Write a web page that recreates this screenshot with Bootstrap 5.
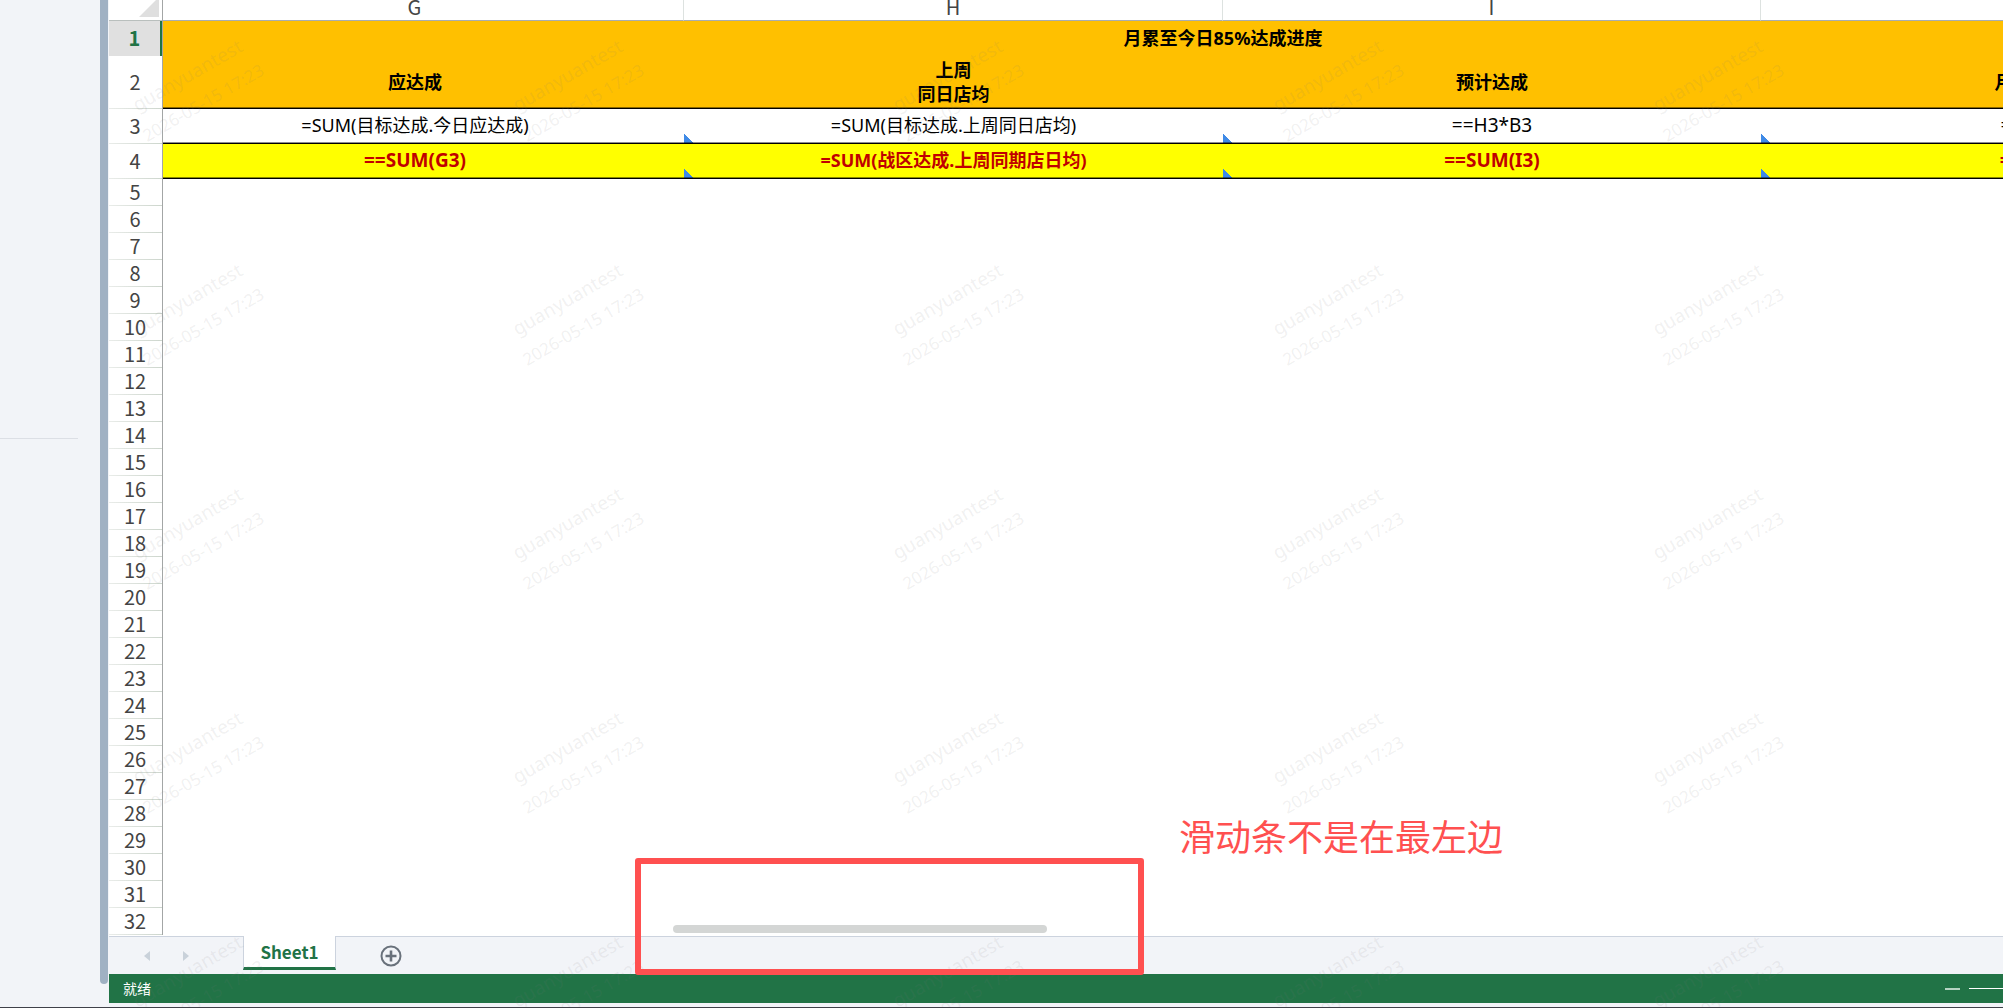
<!DOCTYPE html>
<html lang="zh-CN">
<head>
<meta charset="utf-8">
<meta name="viewport" content="width=device-width, initial-scale=1">
<title>Sheet1</title>
<link href="https://cdn.jsdelivr.net/npm/bootstrap@5.3.0/dist/css/bootstrap.min.css" rel="stylesheet">
<style>
body{font-family:"Noto Sans CJK SC","Noto Sans",sans-serif;background:#f2f4f8;color:#000}
.app-shell{border-bottom:1px solid #3f4149}
.side-panel{width:100px}
.side-rule{width:78px;height:1px;margin-top:438px;background:#dcdfe5}
.side-track{width:9px}
.side-thumb{width:8px;height:calc(100% - 23px);background:#a0b1c3;border-radius:0 0 4px 4px}
.sheet-area{background:#fff}
.row-heads{width:54px;font-size:20px;color:#444;border-right:1px solid #a3a6a6;margin-bottom:1px}
.corner-box{height:21px;border-bottom:1px solid #b9bfbd}
.corner-box svg{display:block}
.row-no{height:27px;line-height:25px;text-align:center;padding-right:1px;background:linear-gradient(90deg,#e9ece9,#cdd6cd) bottom/100% 1px no-repeat}
.row-mid{height:35px;line-height:33px}
.row-tall{height:53px;line-height:51px}
.row-on{background:#e0e0e0;color:#217346;font-weight:700;border-right:2px solid #217346;padding-right:0}
.cells{width:2154px;margin-left:-17px;table-layout:fixed;border-collapse:separate;border-spacing:0;font-family:"Noto Sans","Noto Sans CJK SC",sans-serif;font-size:18px;line-height:24px;text-align:center}
.cells td,.cells th{padding:0;vertical-align:middle;overflow:hidden}
.cells td,.cells .row-title th{padding-bottom:2px}
.cells .latin-cell{font-size:19px}
.cells .col-head th{font-family:"Noto Sans CJK SC",sans-serif;font-size:20px;line-height:13px;font-weight:400;color:#444;height:21px;vertical-align:top;border-bottom:1px solid #a9adb0;border-right:1px solid #dde2e0}
.row-title{height:35px;background:#ffc000}
.row-label{height:53px;background:#ffc000}
.row-plain,.row-sum{height:35px}
.row-sum{background:#ff0;color:#c00000;font-weight:700}
.row-label th,.row-plain td,.row-sum td{border-bottom:1px solid #000;box-shadow:inset 0 -1px rgba(0,0,0,.45)}
.has-mark{background:linear-gradient(to top right,#3f8ae6 50%,transparent 50%) left bottom/9px 10px no-repeat}
.h-thumb{left:29.8%;width:19.7%;height:8px;bottom:3px;border-radius:4px;background:#d4d6d5}
.tab-bar{height:38px;border-top:1px solid #ccd3de;background:#f2f4f8}
.tab-arrows{width:134px;padding-left:34px;gap:28px}
.plain-btn{border:0;background:none;padding:0;line-height:0}
.sheet-tab{width:93px;height:34px;margin-top:-1px;padding:0;background:#fff;border:1px solid #ccd3de;border-width:0 1px 3px;border-bottom-color:#217346;color:#217346;font-weight:700;font-size:17px;line-height:30px}
.add-tab{margin-left:44px}
.status-bar{height:29px;background:#217346;color:#fff;font-size:14px;padding-left:14px}
.status-bar .zoom-minus{width:15px;height:2px;background:#b5d3c2}
.zoom-box{width:34px;margin-left:9px}
.zoom-range{appearance:none;flex:none;width:150px;height:1px;background:#fff;margin:0}
.zoom-range::-webkit-slider-thumb{appearance:none;width:4px;height:12px;background:#fff}
.foot-gap{height:4px}
.wm-layer{inset:0;pointer-events:none}
.wm-grid{display:grid;grid-template-columns:repeat(5,380px);grid-auto-rows:224px;margin:-23px 0 0 5px;font-family:"Noto Sans",sans-serif;color:rgba(125,125,125,.11)}
.wm-tile{display:flex;align-items:center;justify-content:center}
.wm-text{transform:rotate(-30deg);text-align:center;white-space:nowrap;line-height:32px;font-size:17px}
.wm-name{font-size:19px}
.note-box{left:635px;top:858px;width:509px;height:117px;border:6px solid #ff5050;border-radius:3px}
.note-text{left:1179px;top:810px;font-size:36px;line-height:50px;color:#ff5050;white-space:nowrap}
</style>
<script src="https://cdn.jsdelivr.net/npm/bootstrap@5.3.0/dist/js/bootstrap.bundle.min.js"></script>
</head>
<body>
<div class="app-shell d-flex vh-100 overflow-hidden position-relative">
  <aside class="side-panel flex-shrink-0"><div class="side-rule"></div></aside>
  <div class="side-track flex-shrink-0"><div class="side-thumb"></div></div>
  <main class="d-flex flex-column flex-grow-1 overflow-hidden">
    <section class="sheet-area d-flex flex-grow-1 overflow-hidden position-relative">
      <div class="row-heads flex-shrink-0" id="rowHeads">
        <div class="corner-box"><svg width="53" height="20" aria-hidden="true"><path d="M30 17H50V-3Z" fill="#dfdfdf"/></svg></div>
      </div>
      <div class="flex-grow-1 overflow-hidden">
        <table class="cells">
          <colgroup><col style="width:538px"><col style="width:539px"><col style="width:538px"><col style="width:539px"></colgroup>
          <thead><tr class="col-head"><th scope="col">G</th><th scope="col">H</th><th scope="col">I</th><th scope="col">J</th></tr></thead>
          <tbody>
            <tr class="row-title"><th colspan="4">月累至今日85%达成进度</th></tr>
            <tr class="row-label"><th>应达成</th><th>上周<br>同日店均</th><th>预计达成</th><th>月达成率</th></tr>
            <tr class="row-plain"><td>=SUM(目标达成.今日应达成)</td><td class="has-mark">=SUM(目标达成.上周同日店均)</td><td class="has-mark latin-cell">==H3*B3</td><td class="has-mark latin-cell">=I3/G3</td></tr>
            <tr class="row-sum"><td class="latin-cell">==SUM(G3)</td><td class="has-mark">=SUM(战区达成.上周同期店日均)</td><td class="has-mark latin-cell">==SUM(I3)</td><td class="has-mark latin-cell">=I4/G4</td></tr>
          </tbody>
        </table>
      </div>
      <div class="h-thumb position-absolute"></div>
    </section>
    <nav class="tab-bar d-flex flex-shrink-0">
      <div class="tab-arrows d-flex align-items-center">
        <button class="plain-btn" type="button" aria-label="上一个"><svg width="10" height="12"><path d="M7 1V11L1 6Z" fill="#c9d1da"/></svg></button>
        <button class="plain-btn" type="button" aria-label="下一个"><svg width="10" height="12"><path d="M2 1V11L8 6Z" fill="#c9d1da"/></svg></button>
      </div>
      <button class="sheet-tab" type="button">Sheet1</button>
      <button class="plain-btn add-tab" type="button" aria-label="新建工作表"><svg width="22" height="22" fill="none" stroke="#69717b"><circle cx="11" cy="11" r="9.5" stroke-width="2"/><path d="M11 5.5V16.5M5.5 11H16.5" stroke-width="2.6"/></svg></button>
    </nav>
    <footer class="status-bar d-flex align-items-center flex-shrink-0">
      <span>就绪</span>
      <button class="plain-btn zoom-minus ms-auto" type="button" aria-label="缩小"></button>
      <div class="zoom-box d-flex overflow-hidden"><input class="zoom-range" type="range" aria-label="缩放"></div>
    </footer>
    <div class="foot-gap flex-shrink-0"></div>
  </main>
  <div class="wm-layer position-absolute overflow-hidden"><div class="wm-grid" id="wmGrid"></div></div>
  <div class="note-box position-absolute"></div>
  <div class="note-text position-absolute">滑动条不是在最左边</div>
</div>
<script>
const sizes = {1: 'row-mid row-on', 2: 'row-tall', 3: 'row-mid', 4: 'row-mid'};
const heads = document.getElementById('rowHeads');
for (let n = 1; n <= 32; n++) {
  heads.insertAdjacentHTML('beforeend', `<div class="row-no ${sizes[n] || ''}">${n}</div>`);
}
document.getElementById('wmGrid').innerHTML =
  '<div class="wm-tile"><div class="wm-text"><div class="wm-name">guanyuantest</div><div>2026-05-15 17:23</div></div></div>'.repeat(25);
</script>
</body>
</html>
